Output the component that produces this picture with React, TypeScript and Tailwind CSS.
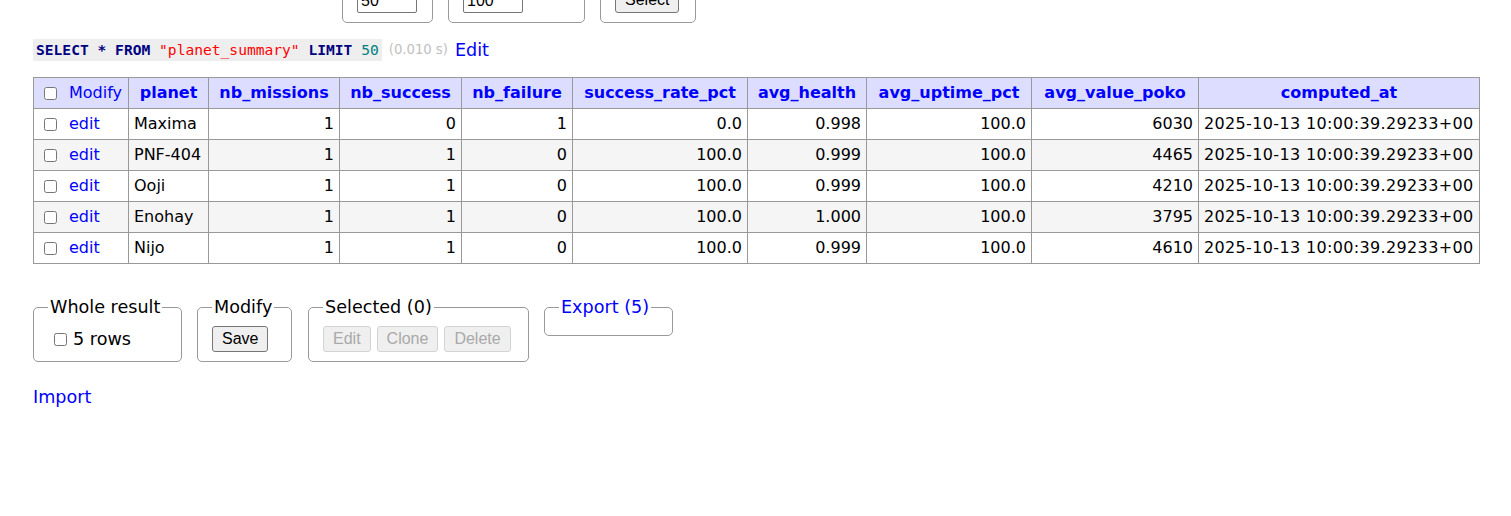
import type { ReactNode } from 'react';

/** One result row of the planet_summary view. */
type Row = {
  planet: string;
  nbMissions: number;
  nbSuccess: number;
  nbFailure: number;
  successRate: string;
  avgHealth: string;
  avgUptime: string;
  avgValue: number;
  computedAt: string;
};

const STAMP = '2025-10-13 10:00:39.29233+00';

const ROWS: Row[] = [
  { planet: 'Maxima', nbMissions: 1, nbSuccess: 0, nbFailure: 1, successRate: '0.0', avgHealth: '0.998', avgUptime: '100.0', avgValue: 6030, computedAt: STAMP },
  { planet: 'PNF-404', nbMissions: 1, nbSuccess: 1, nbFailure: 0, successRate: '100.0', avgHealth: '0.999', avgUptime: '100.0', avgValue: 4465, computedAt: STAMP },
  { planet: 'Ooji', nbMissions: 1, nbSuccess: 1, nbFailure: 0, successRate: '100.0', avgHealth: '0.999', avgUptime: '100.0', avgValue: 4210, computedAt: STAMP },
  { planet: 'Enohay', nbMissions: 1, nbSuccess: 1, nbFailure: 0, successRate: '100.0', avgHealth: '1.000', avgUptime: '100.0', avgValue: 3795, computedAt: STAMP },
  { planet: 'Nijo', nbMissions: 1, nbSuccess: 1, nbFailure: 0, successRate: '100.0', avgHealth: '0.999', avgUptime: '100.0', avgValue: 4610, computedAt: STAMP },
];

const COLUMNS = [
  'planet',
  'nb_missions',
  'nb_success',
  'nb_failure',
  'success_rate_pct',
  'avg_health',
  'avg_uptime_pct',
  'avg_value_poko',
  'computed_at',
];

const CELL = 'border border-[#999] px-[5px] py-[5px] leading-[20px]';
const NUM = `${CELL} text-right`;

function Checkbox({ className = '' }: { className?: string }) {
  return <input type="checkbox" className={`m-0 h-[13px] w-[13px] shrink-0 ${className}`} />;
}

/** Rounded fieldset with a legend sitting in the top border, Adminer style. */
function Box({ legend, width, children }: { legend: ReactNode; width: string; children?: ReactNode }) {
  return (
    <fieldset className={`${width} shrink-0 rounded-[5px] border border-[#999] px-[14px] pt-[8px] pb-[9px]`}>
      <legend className="px-[2px] leading-[22px]">{legend}</legend>
      {children}
    </fieldset>
  );
}

function NativeButton({ children, disabled = false }: { children: ReactNode; disabled?: boolean }) {
  return (
    <button
      type="button"
      disabled={disabled}
      className={
        disabled
          ? "h-[26px] rounded-[3px] border border-[#d3d3d3] bg-[#efefef] px-[9px] font-['Liberation_Sans',Arial,sans-serif] text-[16px] leading-[18px] text-[#a9a9a9]"
          : "h-[26px] rounded-[3px] border border-[#767676] bg-[#efefef] px-[9px] font-['Liberation_Sans',Arial,sans-serif] text-[16px] leading-[18px] text-black"
      }
    >
      {children}
    </button>
  );
}

function TextInput({ value }: { value: string }) {
  return (
    <input
      readOnly
      value={value}
      className="h-[25px] w-[60px] rounded-[2px] border border-[#767676] bg-white px-[3px] font-['Liberation_Sans',Arial,sans-serif] text-[16px]"
    />
  );
}

export default function App() {
  return (
    <div className="min-h-screen bg-white px-[33px] font-['DejaVu_Sans',Verdana,sans-serif] text-[17.6px] leading-[22px] text-black">
      {/* select form, scrolled so that only its bottom edge shows */}
      <div className="flex h-[23px] items-end gap-[15px] overflow-hidden pl-[309px]">
        <Box legend="Limit" width="w-[91px]">
          <TextInput value="50" />
        </Box>
        <Box legend="Text length" width="w-[137px]">
          <TextInput value="100" />
        </Box>
        <Box legend="Action" width="w-[96px]">
          <NativeButton>Select</NativeButton>
        </Box>
      </div>

      <p className="mt-[16px] flex h-[22px] items-center whitespace-nowrap">
        <code className="bg-[#eee] px-[3px] font-['DejaVu_Sans_Mono',monospace] text-[14.6px] leading-[22px]">
          <span className="font-bold text-[#000080]">SELECT</span>{' '}
          <span className="font-bold text-[#000080]">*</span>{' '}
          <span className="font-bold text-[#000080]">FROM</span>{' '}
          <span className="text-[#f00]">"planet_summary"</span>{' '}
          <span className="font-bold text-[#000080]">LIMIT</span>{' '}
          <span className="text-[#008080]">50</span>
        </code>
        <span className="ml-[7px] text-[13.2px] text-[#c0c0c0]">(0.010 s)</span>
        <a href="#" className="ml-[7px] text-[#00f]">Edit</a>
      </p>

      <table className="mt-[16px] w-[1446px] table-fixed border-collapse text-[16px]">
        <colgroup>
          <col className="w-[95px]" />
          <col className="w-[80px]" />
          <col className="w-[131px]" />
          <col className="w-[122px]" />
          <col className="w-[111px]" />
          <col className="w-[175px]" />
          <col className="w-[119px]" />
          <col className="w-[165px]" />
          <col className="w-[167px]" />
          <col className="w-[281px]" />
        </colgroup>
        <thead>
          <tr className="bg-[#ddf]">
            <td className={CELL}>
              <div className="flex items-center">
                <Checkbox className="ml-[5px]" />
                <a href="#" className="ml-[12px] text-[#00f]">Modify</a>
              </div>
            </td>
            {COLUMNS.map((c) => (
              <th key={c} className={`${CELL} text-center font-bold text-[#00f]`}>
                {c}
              </th>
            ))}
          </tr>
        </thead>
        <tbody>
          {ROWS.map((r, i) => (
            <tr key={r.planet} className={i % 2 === 1 ? 'bg-[#f5f5f5]' : 'bg-white'}>
              <td className={CELL}>
                <div className="flex items-center">
                  <Checkbox className="ml-[5px]" />
                  <a href="#" className="ml-[12px] text-[#00f]">edit</a>
                </div>
              </td>
              <td className={CELL}>{r.planet}</td>
              <td className={NUM}>{r.nbMissions}</td>
              <td className={NUM}>{r.nbSuccess}</td>
              <td className={NUM}>{r.nbFailure}</td>
              <td className={NUM}>{r.successRate}</td>
              <td className={NUM}>{r.avgHealth}</td>
              <td className={NUM}>{r.avgUptime}</td>
              <td className={NUM}>{r.avgValue}</td>
              <td className={`${CELL} whitespace-nowrap tracking-[0.35px]`}>{r.computedAt}</td>
            </tr>
          ))}
        </tbody>
      </table>

      <div className="mt-[32px] flex items-start gap-[15px]">
        <Box legend="Whole result" width="w-[149px]">
          <label className="flex h-[26px] items-center">
            <Checkbox className="ml-[6px]" />
            <span className="ml-[6px]">5 rows</span>
          </label>
        </Box>
        <Box legend="Modify" width="w-[95px]">
          <NativeButton>Save</NativeButton>
        </Box>
        <Box legend="Selected (0)" width="ml-[1px] w-[221px]">
          <div className="flex gap-[6px]">
            <NativeButton disabled>Edit</NativeButton>
            <NativeButton disabled>Clone</NativeButton>
            <NativeButton disabled>Delete</NativeButton>
          </div>
        </Box>
        <Box
          legend={
            <a href="#" className="text-[#00f]">
              Export (5)
            </a>
          }
          width="w-[129px]"
        />
      </div>

      <p className="mt-[24px]">
        <a href="#" className="text-[#00f]">Import</a>
      </p>
    </div>
  );
}
